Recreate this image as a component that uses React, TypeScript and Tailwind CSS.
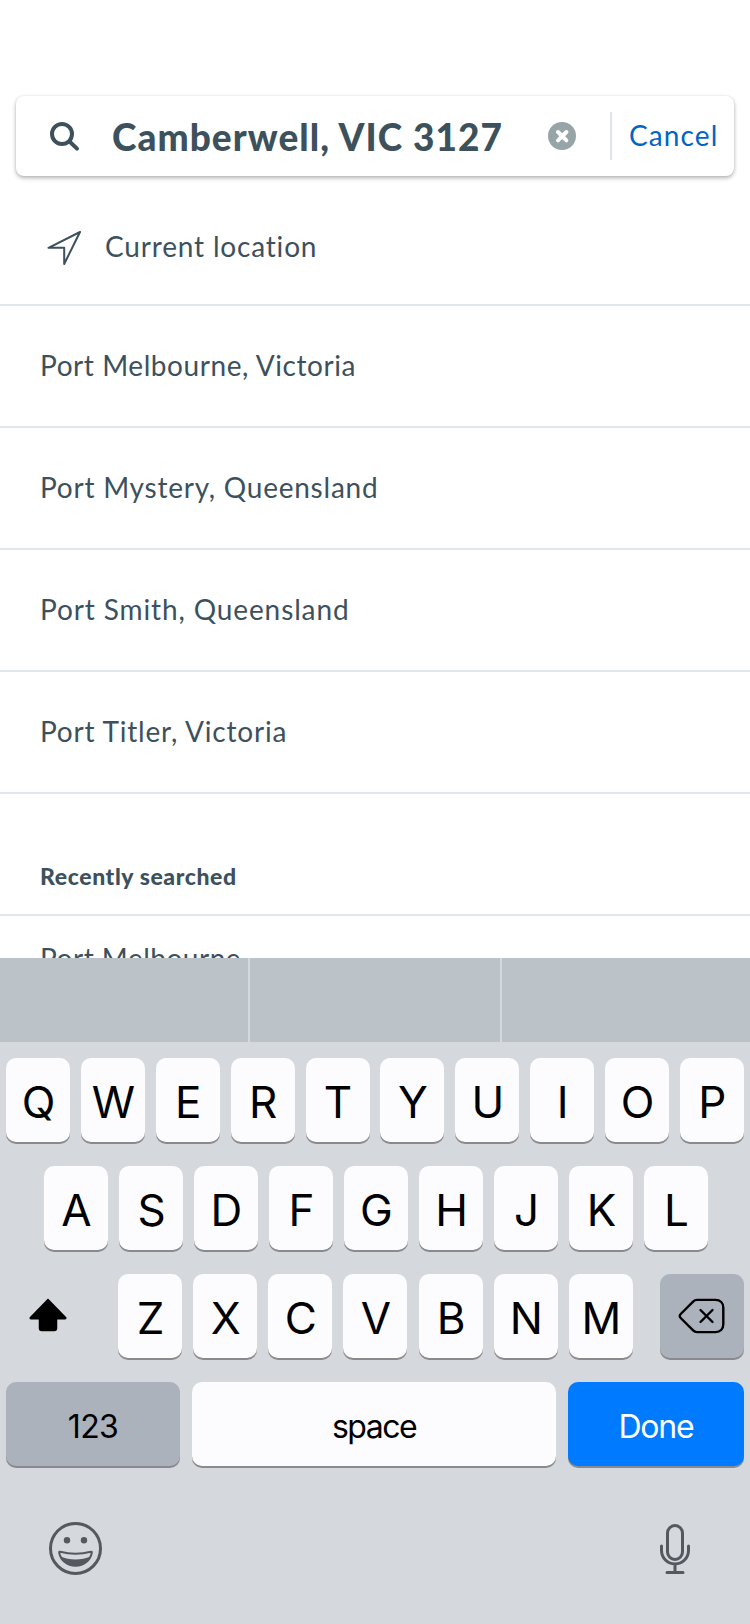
import type { ReactNode } from "react";

const LATO = "font-[Lato,'Noto_Sans',sans-serif]";

const places = [
  { label: "Port Melbourne, Victoria", tracking: "tracking-[0.57px]" },
  { label: "Port Mystery, Queensland", tracking: "tracking-[0.76px]" },
  { label: "Port Smith, Queensland", tracking: "tracking-[0.88px]" },
  { label: "Port Titler, Victoria", tracking: "tracking-[0.8px]" },
];

function Key({ children, className = "w-16 bg-[#fcfcfe]" }: { children: ReactNode; className?: string }) {
  return (
    <button
      className={`flex h-[84px] shrink-0 items-center justify-center rounded-[10px] shadow-[0_2px_0_#898a8d] ${className}`}
    >
      {children}
    </button>
  );
}

function LetterKeys({ letters, className }: { letters: string; className: string }) {
  return (
    <div className={`flex justify-between ${className}`}>
      {letters.split("").map((letter) => (
        <Key key={letter}>
          <span className="pt-1 pl-px text-[44px] leading-[52px]">{letter}</span>
        </Key>
      ))}
    </div>
  );
}

function SearchBar() {
  return (
    <div className="mx-4 mt-24 flex h-20 shrink-0 items-center rounded-lg bg-white shadow-[0_2px_4px_rgba(0,0,0,0.3),0_0_2px_rgba(0,0,0,0.08)]">
      <svg className="ml-8 size-8 shrink-0" viewBox="0 0 32 32" fill="none" stroke="#3d515d" strokeWidth="4">
        <circle cx="14" cy="14" r="10" />
        <path d="M21.5 21.5 29 28.6" strokeLinecap="round" />
      </svg>
      <span className="ml-8 w-[420px] pt-0.5 text-[37px] font-black tracking-[1.05px] whitespace-nowrap">
        Camberwell, VIC 3127
      </span>
      <svg className="ml-[16px] size-7 shrink-0" viewBox="0 0 28 28">
        <circle cx="14" cy="14" r="14" fill="#97a5a8" />
        <path d="m10 10 8.4 8.4M18.4 10 10 18.4" stroke="#fff" strokeWidth="4" strokeLinecap="round" />
      </svg>
      <div className="ml-[34px] h-12 w-0.5 bg-[#dce6ee]" />
      <button className="ml-[17px] pb-0.5 text-[28px] tracking-[1.1px] text-[#0065c5]">Cancel</button>
    </div>
  );
}

export default function App() {
  return (
    <div className={`flex h-[1624px] w-[750px] flex-col overflow-hidden bg-white text-[#3d515d] ${LATO}`}>
      <SearchBar />
      <div className="flex h-[782px] flex-col overflow-hidden text-[28px] leading-[34px]">
        <div className="flex h-[130px] shrink-0 items-center border-b-2 border-[#dee6ee] pt-[15px] pl-[46px]">
          <svg className="size-9 shrink-0" viewBox="0 0 36 36" fill="none" stroke="#3d515d" strokeWidth="2">
            <path d="M34 2 2.5 17.8H18.2V34Z" strokeLinejoin="round" />
          </svg>
          <span className="ml-[23px] pb-1 tracking-[0.82px]">Current location</span>
        </div>
        {places.map(({ label, tracking }) => (
          <div
            key={label}
            className={`flex h-[122px] shrink-0 items-center border-b-2 border-[#dee6ee] pb-0.5 pl-10 ${tracking}`}
          >
            {label}
          </div>
        ))}
        <div className="flex h-[122px] shrink-0 items-center border-b-2 border-[#dee6ee] pt-[43px] pl-10 text-[23px] font-black tracking-[0.6px]">
          Recently searched
        </div>
        <div className="shrink-0 pt-[25px] pl-10 tracking-[0.5px]">Port Melbourne</div>
      </div>
      <div className="flex flex-1 flex-col bg-[#d5d9de] font-[Inter,sans-serif] text-black">
        <div className="flex h-[84px] shrink-0 gap-0.5">
          <div className="w-[248px] bg-[#bbc3c9]" />
          <div className="w-[250px] bg-[#bbc3c9]" />
          <div className="flex-1 bg-[#bbc3c9]" />
        </div>
        <div className="flex flex-col gap-6 pt-4">
          <LetterKeys letters="QWERTYUIOP" className="mx-1.5" />
          <LetterKeys letters="ASDFGHJKL" className="mr-[42px] ml-11" />
          <div className="flex items-center">
            <button className="flex w-[118px] items-center pl-7">
              <svg className="size-10" viewBox="0 0 40 40">
                <path
                  d="M20 3.5 37.5 21.500C38 22.300 37.800 22.800 37 22.800H28.500V32.200Q28.500 34.500 26.200 34.500H13.800Q11.500 34.500 11.500 32.200V22.800H3C2.200 22.800 2 22.300 2.500 21.500Z"
                  fill="#000"
                  stroke="#000"
                  strokeWidth="1.500"
                  strokeLinejoin="round"
                />
              </svg>
            </button>
            <LetterKeys letters="ZXCVBNM" className="w-[515px]" />
            <Key className="ml-[27px] w-[84px] bg-[#abb2bc]">
              <svg width="48" height="38" viewBox="0 0 48 38" fill="none" stroke="#000" strokeLinecap="round" strokeLinejoin="round">
                <path
                  strokeWidth="2.4"
                  d="M19 2.9h18.500c4.800 0 7.800 3 7.800 7.800v16.600c0 4.800-3 7.800-7.800 7.800H19c-1.600 0-2.800-.6-3.900-1.700L2.700 21c-1.300-1.300-1.300-2.700 0-4L15.100 4.600c1.100-1.100 2.300-1.700 3.900-1.700Z"
                />
                <path strokeWidth="2.400" d="m22.500 13 12 12M34.500 13l-12 12" />
              </svg>
            </Key>
          </div>
          <div className="mx-1.5 flex gap-3 text-[32px] leading-[40px]">
            <Key className="w-[174px] bg-[#abb2bc] pt-[5px]">
              <span className="tracking-[-0.600px]">123</span>
            </Key>
            <Key className="w-[364px] bg-[#fcfcfe] pt-[5px]">
              <span className="tracking-[-1.500px]">space</span>
            </Key>
            <Key className="w-[176px] bg-[#007aff] pt-[5px] text-white">
              <span className="tracking-[-1.200px]">Done</span>
            </Key>
          </div>
        </div>
        <div className="mt-[54px] flex justify-between pr-[57px] pl-12">
          <svg className="h-14 w-[55px]" viewBox="0 0 55 56" fill="none" stroke="#55585e">
            <circle cx="27.500" cy="28.400" r="25" strokeWidth="3" />
            <circle cx="19" cy="20.200" r="3.200" fill="#55585e" stroke="none" />
            <circle cx="36" cy="20.200" r="3.200" fill="#55585e" stroke="none" />
            <path
              d="M11.200 32.700c-.2-.8.300-1.100 1-.9 9.500 2.500 21 2.500 30.600 0 .7-.2 1.200.1 1 .9C42.300 40.200 36 45.700 27.500 45.700S12.700 40.200 11.200 32.700Z"
              strokeWidth="2"
            />
            <path d="M12.500 36.500c9 4 21 4 30 0-2.200 5.500-8 9.300-15 9.300s-12.800-3.800-15-9.300Z" fill="#55585e" stroke="none" />
          </svg>
          <svg className="h-14 w-9" viewBox="0 0 36 56" fill="none" stroke="#55585e" strokeWidth="3" strokeLinecap="round">
            <rect x="10.500" y="5.500" width="15" height="34" rx="7.500" />
            <path d="M4.500 26v4.500a13.500 13.500 0 0 0 27 0V26M18 44v8M10 52.400h16" />
          </svg>
        </div>
      </div>
    </div>
  );
}
